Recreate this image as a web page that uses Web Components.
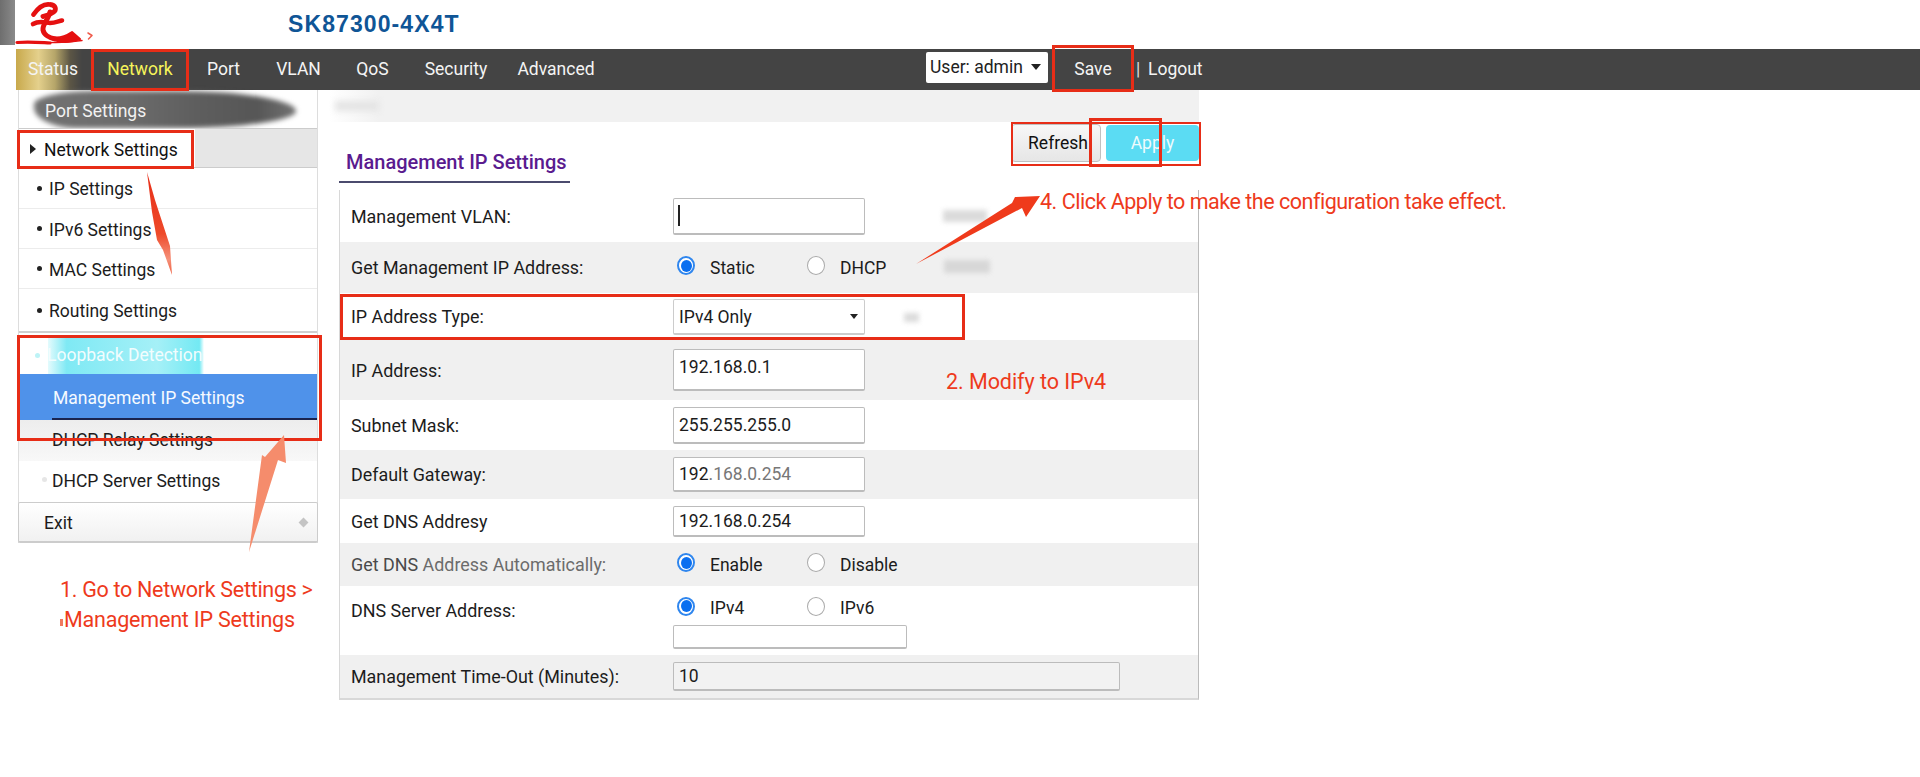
<!DOCTYPE html>
<html lang="en">
<head>
<meta charset="utf-8">
<title>SK87300-4X4T</title>
<style>
  html, body { margin: 0; background: #fff; }
  body { width: 1920px; height: 777px; overflow: hidden; position: relative; font-family: Roboto, "Liberation Sans", sans-serif; color: #1c1c1c; }
  .main { display: flex; align-items: flex-start; }
</style>
</head>
<body>

<sk-header title-text="SK87300-4X4T"></sk-header>

<sk-nav>
  <sk-tab w="75" kind="status">Status</sk-tab>
  <sk-tab w="98" kind="current">Network</sk-tab>
  <sk-tab w="69">Port</sk-tab>
  <sk-tab w="81">VLAN</sk-tab>
  <sk-tab w="67">QoS</sk-tab>
  <sk-tab w="100">Security</sk-tab>
  <sk-tab w="100">Advanced</sk-tab>
  <sk-user slot="right"></sk-user>
</sk-nav>

<div class="main">
  <sk-sidebar>
    <sk-menu-item h="38" kind="smudge">Port Settings</sk-menu-item>
    <sk-menu-item h="40" kind="open">Network Settings</sk-menu-item>
    <sk-menu-item h="41" kind="bullet">IP Settings</sk-menu-item>
    <sk-menu-item h="40" kind="bullet">IPv6 Settings</sk-menu-item>
    <sk-menu-item h="40" kind="bullet">MAC Settings</sk-menu-item>
    <sk-menu-item h="44" kind="bullet last">Routing Settings</sk-menu-item>
    <sk-menu-item h="41" kind="glow">Loopback Detection</sk-menu-item>
    <sk-menu-item h="46" kind="active">Management IP Settings</sk-menu-item>
    <sk-menu-item h="41" kind="sub shade">DHCP Relay Settings</sk-menu-item>
    <sk-menu-item h="41" kind="sub">DHCP Server Settings</sk-menu-item>
    <sk-menu-item h="41" kind="exit">Exit</sk-menu-item>
  </sk-sidebar>

  <sk-content heading="Management IP Settings">
    <sk-row h="52">
      <span slot="label">Management VLAN:</span>
      <sk-input w="192" h="37" caret></sk-input>
    </sk-row>
    <sk-row h="51" shade>
      <span slot="label">Get Management IP Address:</span>
      <sk-radio checked>Static</sk-radio><sk-radio>DHCP</sk-radio>
    </sk-row>
    <sk-row h="47">
      <span slot="label">IP Address Type:</span>
      <sk-select>IPv4 Only</sk-select>
    </sk-row>
    <sk-row h="60" shade>
      <span slot="label">IP Address:</span>
      <sk-input w="192" h="42" lift>192.168.0.1</sk-input>
    </sk-row>
    <sk-row h="50">
      <span slot="label">Subnet Mask:</span>
      <sk-input w="192" h="37">255.255.255.0</sk-input>
    </sk-row>
    <sk-row h="49" shade>
      <span slot="label">Default Gateway:</span>
      <sk-input w="192" h="35">192<span style="color:#777">.168.0.254</span></sk-input>
    </sk-row>
    <sk-row h="44">
      <span slot="label">Get DNS Addresy</span>
      <sk-input w="192" h="31">192.168.0.254</sk-input>
    </sk-row>
    <sk-row h="43" shade>
      <span slot="label" style="color:#4a4a4a">Get DNS <span style="color:#6b6b6b">Address Automatically:</span></span>
      <sk-radio checked>Enable</sk-radio><sk-radio>Disable</sk-radio>
    </sk-row>
    <sk-row h="69" top>
      <span slot="label">DNS Server Address:</span>
      <div style="display:flex;flex-direction:column;gap:9px;padding-top:2px">
        <div style="display:flex"><sk-radio checked>IPv4</sk-radio><sk-radio>IPv6</sk-radio></div>
        <sk-input w="234" h="24"></sk-input>
      </div>
    </sk-row>
    <sk-row h="43" shade>
      <span slot="label">Management Time-Out (Minutes):</span>
      <sk-input w="447" h="29" shaded>10</sk-input>
    </sk-row>
  </sk-content>
</div>

<sk-annotations></sk-annotations>

<script>
// thin base so each element only has to supply its css and markup
class SkBase extends HTMLElement {
    render(css, html) {
        this.attachShadow({mode: "open"});
        this.shadowRoot.innerHTML = `<style>${css}</style>${html}`;
    }
}

class SkHeader extends SkBase {
    constructor() {
        super();
        this.render(`
            :host { display: flex; height: 49px; align-items: stretch; }
            .edge { width: 15px; height: 45px; background: linear-gradient(90deg, #6e6e6e, #8a8a8a); }
            .logo { width: 273px; flex: none; }
            h1 { margin: 0; align-self: center; font: bold 23px "Liberation Sans", sans-serif; letter-spacing: 1.1px; color: #0f5596; }
        `, `
            <div class="edge"></div>
            <svg class="logo" viewBox="15 0 273 49" width="273" height="49" fill="none" stroke="#e51010" stroke-linecap="round" stroke-linejoin="round">
                <path d="M33.500 14.500C38 8 44 3.500 50 4.500 56 5 57 10 53 12.500 50 15 46 15 43 16.500" stroke-width="4.800"/>
                <path d="M33 24C40 20 46 23 50 23 55 23 59 21 62 20.500" stroke-width="4.600"/>
                <path d="M50 12C49 18 42 25 43 30 44 35 50 38 55 39" stroke-width="5"/>
                <path d="M52 37C60 39 66 36 72 32 L80 39 C70 43 60 43 52 39Z" fill="#e51010" stroke-width="2"/>
                <path d="M17 42.500C30 41.500 40 42.500 50 43" stroke-width="3.200"/>
                <path d="M50 42.500C60 43 72 42 82 40.500" stroke-width="1.400"/>
                <path d="M88 33L92 35.500 88.500 39" stroke-width="1.500" stroke="#ef5a4a"/>
            </svg>
            <h1>${this.getAttribute("title-text")}</h1>
        `);
    }
}

class SkNav extends SkBase {
    constructor() {
        super();
        this.render(`
            :host { display: flex; height: 41px; margin-left: 16px; background: #444; color: #f4f4f4; font-size: 17.5px; }
            .right { margin-left: 320px; display: flex; }
        `, `<slot></slot><div class="right"><slot name="right"></slot></div>`);
    }
}

class SkTab extends SkBase {
    constructor() {
        super();
        this.render(`
            :host { display: flex; align-items: center; justify-content: center; height: 41px; box-sizing: border-box; padding-bottom: 2px; }
            :host([kind="current"]) { color: #f6f45a; }
            :host([kind="status"]) { padding-right: 1px; background: linear-gradient(90deg, #c8a94c, #e4d08c 30%, #b5a569 52%, #5c5645 72%, #444 88%); }
        `, `<slot></slot>`);
        this.style.width = this.getAttribute("w") + "px";
    }
}

class SkUser extends SkBase {
    constructor() {
        super();
        this.render(`
            :host { display: flex; align-items: center; height: 41px; padding-bottom: 2px; box-sizing: border-box; }
            .select { box-sizing: border-box; display: flex; align-items: center; width: 122px; height: 31px; margin-top: -3px; padding-left: 4px; background: #fff; border-radius: 2px; color: #222; }
            .select i { width: 0; height: 0; margin-left: 8px; border: 5px solid transparent; border-top: 6px solid #222; border-bottom: 0; }
            .save { width: 78px; margin-left: 6px; text-align: center; }
            .sep { margin-left: 4px; width: 12px; color: #ddd; }
        `, `
            <div class="select"><span>User: admin</span><i></i></div>
            <span class="save">Save</span><span class="sep">|</span><span>Logout</span>
        `);
    }
}

class SkSidebar extends SkBase {
    constructor() {
        super();
        this.render(`
            :host { display: block; flex: none; width: 300px; margin-left: 18px; box-sizing: border-box; border-left: 1px solid #ddd; border-right: 1px solid #ddd; font-size: 17.5px; }
        `, `<slot></slot>`);
    }
}

class SkMenuItem extends SkBase {
    constructor() {
        super();
        this.render(`
            :host { display: flex; align-items: center; box-sizing: border-box; position: relative; border-bottom: 1px solid #ececec; }
            .t { position: relative; top: 1px; }
            .dot { width: 5px; height: 5px; border-radius: 50%; background: #222; margin: 0 7px 0 18px; }
            .tri { width: 0; height: 0; margin: 0 8px 0 11px; border: 5px solid transparent; border-left: 6px solid #222; border-right: 0; }
            :host([kind="open"]) { background: linear-gradient(90deg, #fff 176px, #e6e6e6 176px); border: 1px solid #ccc; border-width: 1px 0; padding-top: 2px; color: #111; }
            :host([kind~="last"]) { border-bottom: 2px solid #cfcfcf; }
            :host([kind="smudge"]) { color: #f2f2f2; padding-left: 26px; border: 0; padding-top: 2px; }
            .smudge { position: absolute; left: 15px; top: 1px; width: 262px; height: 37px; border-radius: 25% 50% 50% 18% / 40% 60% 50% 60%; background: linear-gradient(90deg, #727272, #6c6c6c 35%, #5e5e5e 62%, #565656 85%, #727272); filter: blur(2.500px); }
            :host([kind="glow"]) { color: #f2fdfe; padding-left: 28px; border: 0; }
            .glow { position: absolute; left: 29px; top: 4px; width: 156px; height: 37px; background: linear-gradient(90deg, #e4fbfd, #7fe9f4 12%, #a5f0f7 70%, #73e9f3 97%, #fff); }
            .bead { position: absolute; left: 16px; top: 20px; width: 5px; height: 5px; border-radius: 50%; background: #bdf3f6; }
            :host([kind="active"]) { background: #4f92ea; color: #f6faff; padding-left: 34px; border: 0; }
            .under { position: absolute; left: 33px; right: 0; bottom: 0; height: 2px; background: #1a2450; }
            :host([kind~="sub"]) { padding-left: 33px; padding-bottom: 3px; border: 0; }
            :host([kind~="shade"]) { background: linear-gradient(180deg, #ededed, #f8f8f8); }
            .ghost { position: absolute; left: 23px; top: 16px; width: 5px; height: 5px; border-radius: 50%; background: #e6e6e6; }
            :host([kind="exit"]) { padding-left: 25px; padding-right: 10px; border: 1px solid #ccc; margin: 0 -1px; background: linear-gradient(180deg, #fff, #f1f1f1); border-bottom-width: 2px; border-radius: 2px; justify-content: space-between; }
            .dia { width: 7px; height: 7px; background: #c4c4c4; transform: rotate(45deg); }
        `, this.markup());
        this.style.height = this.getAttribute("h") + "px";
    }
    markup() {
        const kind = this.getAttribute("kind");
        const label = `<span class="t"><slot></slot></span>`;
        if (kind.startsWith("bullet")) return `<i class="dot"></i>${label}`;
        if (kind === "open") return `<i class="tri"></i>${label}`;
        if (kind === "smudge") return `<i class="smudge"></i>${label}`;
        if (kind === "glow") return `<i class="glow"></i><i class="bead"></i>${label}`;
        if (kind === "active") return `${label}<i class="under"></i>`;
        if (kind === "exit") return `${label}<i class="dia"></i>`;
        if (kind === "sub") return `<i class="ghost"></i>${label}`;
        return label;
    }
}

class SkContent extends SkBase {
    constructor() {
        super();
        this.render(`
            :host { display: block; width: 870px; margin-left: 11px; flex: none; font-size: 17.5px; }
            .crumb { height: 32px; display: flex; align-items: center; background: linear-gradient(90deg, #fff, #f1f1f1 50px); }
            .crumb i { width: 44px; height: 10px; margin-left: 6px; background: #e4e4e4; filter: blur(3px); }
            .bar { height: 68px; display: flex; justify-content: space-between; align-items: flex-start; padding-left: 10px; }
            h2 { margin: 0; width: 231px; height: 61px; box-sizing: border-box; padding: 28px 0 0 7px; font-size: 20px; line-height: 25px; font-weight: 500; color: #5a1b8f; border-bottom: 2px solid #4b4b6e; }
            .btns { display: flex; gap: 5px; padding-top: 2px; }
            .btn { box-sizing: border-box; display: flex; align-items: center; justify-content: center; height: 38px; border-radius: 4px; }
            .refresh { width: 90px; padding-left: 4px; background: linear-gradient(180deg, #f7f7f7, #e6e6e6); border: 1px solid #c0c0c0; color: #111; }
            .apply { width: 93px; margin-top: 1px; height: 36px; background: #5bdcf3; color: #eefbfd; }
            .table { margin-left: 10px; border-left: 1px solid #d8d8d8; border-right: 1px solid #bbb; border-bottom: 2px solid #d8d8d8; box-sizing: border-box; }
        `, `
            <div class="crumb"><i></i></div>
            <div class="bar">
                <h2>${this.getAttribute("heading")}</h2>
                <div class="btns"><div class="btn refresh">Refresh</div><div class="btn apply">Apply</div></div>
            </div>
            <div class="table"><slot></slot></div>
        `);
    }
}

class SkRow extends SkBase {
    constructor() {
        super();
        this.render(`
            :host { display: flex; align-items: center; box-sizing: border-box; background: #fff; }
            :host([shade]) { background: #f0f0f0; }
            :host([top]) { align-items: flex-start; padding-top: 12px; }
            .label { width: 333px; flex: none; padding-left: 11px; box-sizing: border-box; font-size: 17.9px; }
            :host([top]) .label { position: relative; top: 2px; }
            .ctl { display: flex; align-items: center; }
        `, `<div class="label"><slot name="label"></slot></div><div class="ctl"><slot></slot></div>`);
        this.style.height = this.getAttribute("h") + "px";
    }
}

class SkInput extends SkBase {
    constructor() {
        super();
        this.render(`
            :host { display: flex; align-items: center; box-sizing: border-box; padding-left: 5px; background: #fff; border: 1px solid #bcbcbc; border-bottom-width: 2px; border-radius: 2px; }
            :host([shaded]) { background: #f2f2f2; }
            :host([lift]) { padding-bottom: 5px; }
            .caret { width: 1.5px; height: 21px; background: #222; margin-left: -1px; }
        `, `${this.hasAttribute("caret") ? '<i class="caret"></i>' : ""}<slot></slot>`);
        this.style.width = this.getAttribute("w") + "px";
        this.style.height = this.getAttribute("h") + "px";
    }
}

class SkSelect extends SkBase {
    constructor() {
        super();
        this.render(`
            :host { display: flex; align-items: center; justify-content: space-between; box-sizing: border-box; width: 192px; height: 36px; padding: 0 6px 0 5px; background: #fff; border: 1px solid #ccc; border-bottom-width: 2px; border-radius: 2px; }
            i { width: 0; height: 0; border: 4px solid transparent; border-top: 5px solid #222; border-bottom: 0; }
            span { position: relative; top: 1px; }
        `, `<span><slot></slot></span><i></i>`);
    }
}

class SkRadio extends SkBase {
    constructor() {
        super();
        this.render(`
            :host { display: flex; align-items: center; width: 130px; padding-left: 4px; box-sizing: border-box; margin-top: -4px; }
            .o { box-sizing: border-box; width: 18px; height: 19px; margin-right: 15px; border: 1px solid #aaa; border-radius: 50%; background: #fff; display: flex; align-items: center; justify-content: center; }
            :host([checked]) .o { border: 2px solid #2f86ee; }
            :host([checked]) .o::after { content: ""; width: 11px; height: 12px; border-radius: 50%; background: #0a6ff0; }
            span { position: relative; top: 2px; }
        `, `<i class="o"></i><span><slot></slot></span>`);
    }
}

// red boxes, arrows and notes someone drew on top of the screenshot
class SkAnnotations extends SkBase {
    constructor() {
        super();
        const boxes = [
            [91, 49, 98, 42, 3], [17, 130, 177, 39, 3], [17, 335, 305, 106, 3],
            [1052, 45, 82, 47, 3], [340, 294, 625, 46, 3], [1011, 122, 190, 44, 2], [1089, 118, 73, 49, 3]
        ];
        const notes = [
            [60, 577, -0.3, "1. Go to Network Settings &gt;"],
            [64, 607, -0.2, "Management IP Settings"],
            [946, 369, -0.05, "2. Modify to IPv4"],
            [1040, 189, -0.48, "4. Click Apply to make the configuration take effect."]
        ];
        this.render(`
            :host { position: absolute; inset: 0; display: block; pointer-events: none; }
            svg { position: absolute; left: 0; top: 0; }
            .box { position: absolute; box-sizing: border-box; border: 3px solid #e72d17; }
            .note { position: absolute; font-size: 21.5px; line-height: 26px; color: #ee3a1c; white-space: nowrap; }
            .smear { position: absolute; background: #cfcfcf; filter: blur(2.5px); opacity: .75; }
        `, `
            <div class="smear" style="left:943px;top:210px;width:44px;height:12px"></div>
            <div class="smear" style="left:944px;top:260px;width:46px;height:13px"></div>
            <div class="smear" style="left:904px;top:313px;width:15px;height:9px"></div>
            ${boxes.map(b => `<div class="box" style="left:${b[0]}px;top:${b[1]}px;width:${b[2]}px;height:${b[3]}px;border-width:${b[4]}px"></div>`).join("")}
            ${notes.map(n => `<div class="note" style="left:${n[0]}px;top:${n[1]}px;letter-spacing:${n[2]}px">${n[3]}</div>`).join("")}
            <svg width="1920" height="777">
                <defs>
                    <linearGradient id="a1" x1="0" y1="0" x2="0" y2="1">
                        <stop offset="0" stop-color="#e72d17"/><stop offset=".6" stop-color="#ee4a2a"/><stop offset=".85" stop-color="#f5917a"/><stop offset="1" stop-color="#ee5a3a"/>
                    </linearGradient>
                </defs>
                <polygon fill="url(#a1)" points="147,172 155,200 170,246 172,275 163,250 157,240 152,212"/>
                <polygon fill="#f58c6c" points="284,435 286,463 278,460 249,552 262,455 265,457"/>
                <polygon fill="#ef3a1b" points="1040,196 1026,217 1022,208 916,264 1012,203 1015,197"/>
                <rect x="60" y="619" width="3" height="7" fill="#f07a60"/>
            </svg>
        `);
    }
}

customElements.define("sk-header", SkHeader);
customElements.define("sk-nav", SkNav);
customElements.define("sk-tab", SkTab);
customElements.define("sk-user", SkUser);
customElements.define("sk-sidebar", SkSidebar);
customElements.define("sk-menu-item", SkMenuItem);
customElements.define("sk-content", SkContent);
customElements.define("sk-row", SkRow);
customElements.define("sk-input", SkInput);
customElements.define("sk-select", SkSelect);
customElements.define("sk-radio", SkRadio);
customElements.define("sk-annotations", SkAnnotations);
</script>
</body>
</html>
